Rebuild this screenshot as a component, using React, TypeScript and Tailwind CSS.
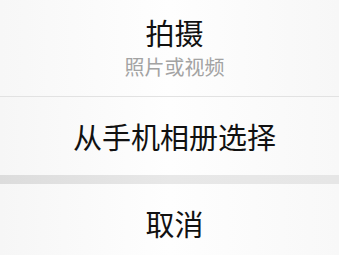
export default function App() {
  return (
    <div className="w-[339px] h-[255px] overflow-hidden bg-[#fbfbfb] font-['Noto_Sans_CJK_SC',sans-serif]">
      <button className="w-full h-[96px] flex flex-col items-center pt-[15px] pl-[10px] bg-gradient-to-r from-[#f7f7f7] via-[#fefefe] to-[#f7f7f7]">
        <span className="text-[29px] leading-[35px] text-[#111]">拍摄</span>
        <span className="mt-[4px] text-[20px] leading-[25px] text-[#a3a3a3]">照片或视频</span>
      </button>
      <div className="h-px bg-[#e2e2e2]" />
      <button className="w-full h-[78px] flex items-center justify-center pl-[10px] bg-gradient-to-r from-[#f6f6f6] via-[#fefefe] to-[#f8f8f8]">
        <span className="text-[29px] leading-[35px] text-[#111]">从手机相册选择</span>
      </button>
      <div className="h-[9px] bg-gradient-to-r from-[#dcdcdc] via-[#e8e8e8] to-[#e6e6e6]" />
      <button className="w-full h-[78px] flex items-center justify-center pl-[10px] bg-gradient-to-r from-[#f6f6f6] via-[#fefefe] to-[#f8f8f8]">
        <span className="text-[29px] leading-[35px] text-[#111]">取消</span>
      </button>
    </div>
  );
}
